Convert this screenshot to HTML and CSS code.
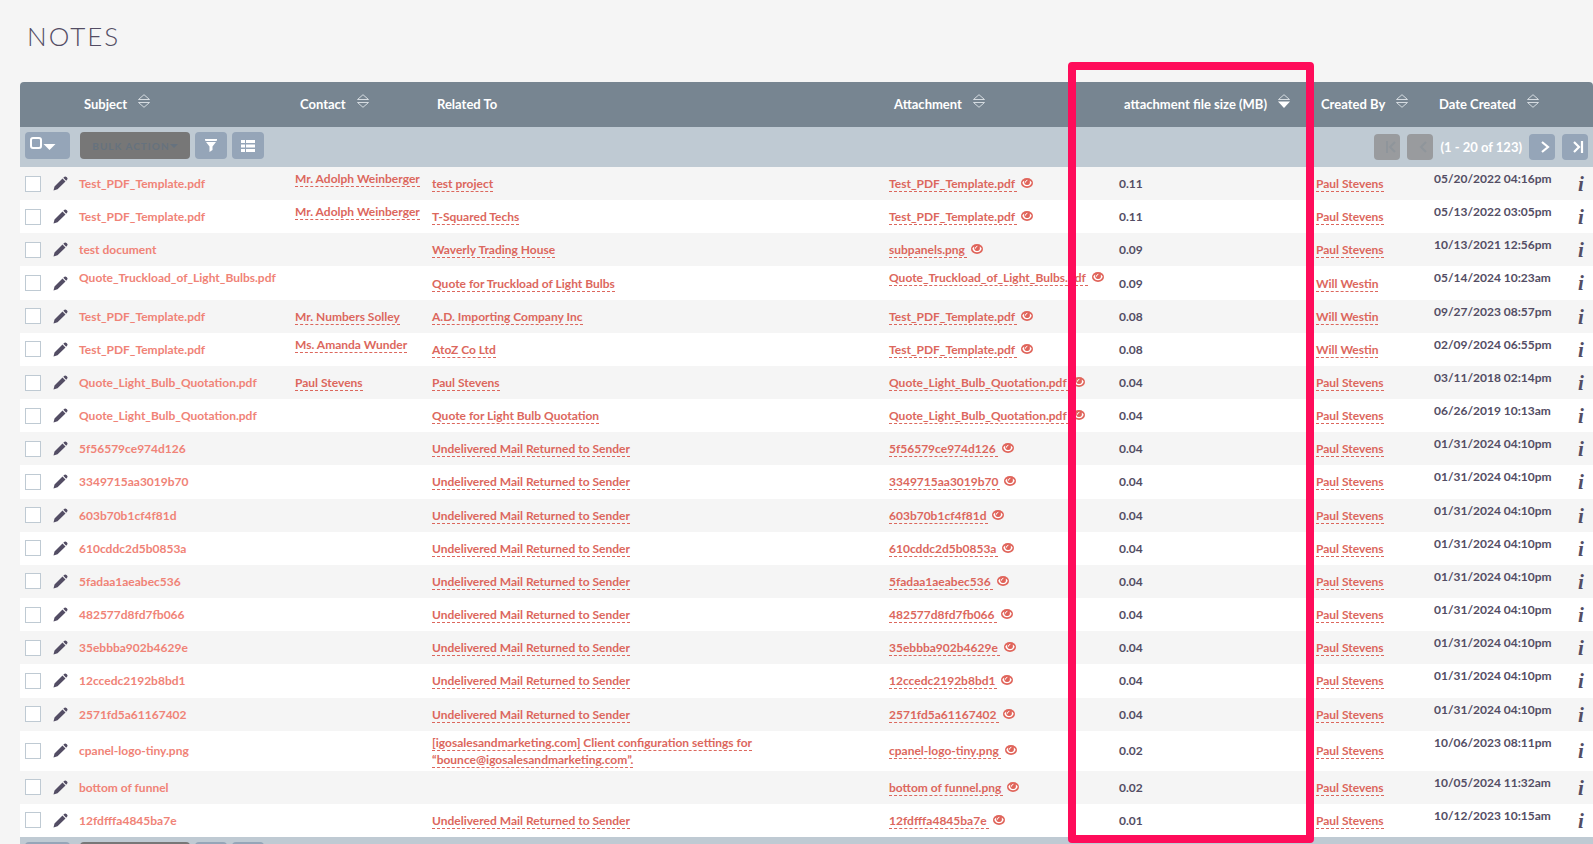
FILE: index.html
```
<!DOCTYPE html>
<html lang="en">
<head>
    <meta charset="UTF-8">
    <meta name="viewport" content="width=device-width, initial-scale=1.0">
    <title>Notes</title>
    <link rel="stylesheet" href="styles.css">
</head>
<body>
    <svg class="sprite" aria-hidden="true">
        <symbol id="sort" viewBox="0 0 14 14">
            <path d="M1.500 5.500 L7 0.700 L12.500 5.500 Z M1.500 8.500 L7 13.300 L12.500 8.500 Z" fill="none" stroke="#d5dbe0"/>
        </symbol>
        <symbol id="sort-desc" viewBox="0 0 14 14">
            <path d="M1.500 5.500 L7 0.700 L12.500 5.500 Z" fill="none" stroke="#d5dbe0"/>
            <path d="M1 7.500 H13 L7 14 Z" fill="#fff"/>
        </symbol>
        <symbol id="pencil" viewBox="0 0 15 15">
            <path d="M0.500 14.500 L1.500 10.500 L9.500 2.500 L12.500 5.500 L4.500 13.200 Z M10.300 1.800 L11.500 0.700 Q12.500 0 13.500 1 L14.200 1.700 Q15 2.600 14.200 3.500 L13.200 4.700 Z" fill="#534d64"/>
        </symbol>
        <symbol id="eye" viewBox="0 0 12 10">
            <ellipse cx="6" cy="5" rx="6" ry="5" fill="#e0645a"/>
            <path d="M1.300 4.800 Q2 3 3.200 2.400 Q2.600 6.800 6 7 T8.800 2.400 Q10 3 10.700 4.800 Q9.300 8.300 6 8.300 T1.300 4.800 Z" fill="#fff"/>
            <path d="M4.400 4.600 Q4.300 2.600 6.400 2.300" fill="none" stroke="#fff"/>
        </symbol>
        <symbol id="filter" viewBox="0 0 12 13">
            <path d="M0 0 H12 V1 L11.500 2 H0.500 L0 1 Z M1 3 H11 L7.500 7.500 V11 L4.500 13 V7.500 Z" fill="#fff"/>
        </symbol>
        <symbol id="list" viewBox="0 0 14 12">
            <path d="M0 0 H4 V3 H0 Z M5 0 H14 V3 H5 Z M0 4.500 H4 V7.500 H0 Z M5 4.500 H14 V7.500 H5 Z M0 9 H4 V12 H0 Z M5 9 H14 V12 H5 Z" fill="#fff"/>
        </symbol>
        <symbol id="caret" viewBox="0 0 12 6">
            <path d="M0 0 H12 L6 6 Z" fill="currentColor"/>
        </symbol>
        <symbol id="next" viewBox="0 0 12 12">
            <path d="M3 1 L9 6 L3 11" fill="none" stroke="currentColor" stroke-width="2.200"/>
        </symbol>
        <symbol id="last" viewBox="0 0 12 12">
            <path d="M2 1 L7 6 L2 11 M10 0 V12" fill="none" stroke="currentColor" stroke-width="2.200"/>
        </symbol>
        <symbol id="prev" viewBox="0 0 12 12">
            <path d="M9 1 L4 6 L9 11" fill="none" stroke="currentColor" stroke-width="2"/>
        </symbol>
        <symbol id="first" viewBox="0 0 12 12">
            <path d="M11 1 L6 6 L11 11 M3 0 V12" fill="none" stroke="currentColor" stroke-width="2"/>
        </symbol>
    </svg>

    <h1 class="module-title">NOTES</h1>

    <div class="list-view">
        <table class="list">
            <colgroup>
                <col class="col-check">
                <col class="col-edit">
                <col class="col-subject">
                <col class="col-contact">
                <col class="col-related">
                <col class="col-attachment">
                <col class="col-size">
                <col class="col-user">
                <col class="col-date">
                <col class="col-info">
            </colgroup>
            <thead>
                <tr>
                    <th></th>
                    <th></th>
                    <th><a href="#">Subject <svg class="sort"><use href="#sort"/></svg></a></th>
                    <th><a href="#">Contact <svg class="sort"><use href="#sort"/></svg></a></th>
                    <th>Related To</th>
                    <th><a href="#">Attachment <svg class="sort"><use href="#sort"/></svg></a></th>
                    <th><a href="#">attachment file size (MB) <svg class="sort"><use href="#sort-desc"/></svg></a></th>
                    <th><a href="#">Created By <svg class="sort"><use href="#sort"/></svg></a></th>
                    <th><a href="#">Date Created <svg class="sort"><use href="#sort"/></svg></a></th>
                    <th></th>
                </tr>
                <tr class="toolbar-row">
                    <td colspan="10">
                        <div class="toolbar">
                            <button class="btn btn-select" aria-label="Select"><span class="box"></span><svg class="caret"><use href="#caret"/></svg></button>
                            <button class="btn btn-bulk" disabled>BULK ACTION<svg class="caret-small"><use href="#caret"/></svg></button>
                            <button class="btn btn-icon" aria-label="Filter"><svg class="icon-filter"><use href="#filter"/></svg></button>
                            <button class="btn btn-icon" aria-label="Columns"><svg class="icon-list"><use href="#list"/></svg></button>
                            <div class="pagination">
                                <button class="btn btn-page" aria-label="Start" disabled><svg><use href="#first"/></svg></button>
                                <button class="btn btn-page" aria-label="Previous" disabled><svg><use href="#prev"/></svg></button>
                                <span class="page-numbers">(1 - 20 of 123)</span>
                                <button class="btn btn-page" aria-label="Next"><svg><use href="#next"/></svg></button>
                                <button class="btn btn-page" aria-label="End"><svg><use href="#last"/></svg></button>
                            </div>
                        </div>
                    </td>
                </tr>
            </thead>
            <tbody id="rows"></tbody>
            <tfoot id="footer"></tfoot>
        </table>
        <div class="highlight"></div>
    </div>

    <script>
        const mail = 'Undelivered Mail Returned to Sender';
        const paul = 'Paul Stevens';
        const will = 'Will Westin';

        // subject, contact, related to, attachment, size, created by, date, cells aligned to the top
        const notes = [
            ['Test_PDF_Template.pdf', 'Mr. Adolph Weinberger', 'test project', 'Test_PDF_Template.pdf', '0.11', paul, '05/20/2022 04:16pm', 'contact'],
            ['Test_PDF_Template.pdf', 'Mr. Adolph Weinberger', 'T-Squared Techs', 'Test_PDF_Template.pdf', '0.11', paul, '05/13/2022 03:05pm', 'contact'],
            ['test document', '', 'Waverly Trading House', 'subpanels.png', '0.09', paul, '10/13/2021 12:56pm', ''],
            ['Quote_Truckload_of_Light_Bulbs.pdf', '', 'Quote for Truckload of Light Bulbs', 'Quote_Truckload_of_Light_Bulbs.pdf', '0.09', will, '05/14/2024 10:23am', 'subject attachment'],
            ['Test_PDF_Template.pdf', 'Mr. Numbers Solley', 'A.D. Importing Company Inc', 'Test_PDF_Template.pdf', '0.08', will, '09/27/2023 08:57pm', ''],
            ['Test_PDF_Template.pdf', 'Ms. Amanda Wunder', 'AtoZ Co Ltd', 'Test_PDF_Template.pdf', '0.08', will, '02/09/2024 06:55pm', 'contact'],
            ['Quote_Light_Bulb_Quotation.pdf', 'Paul Stevens', 'Paul Stevens', 'Quote_Light_Bulb_Quotation.pdf', '0.04', paul, '03/11/2018 02:14pm', ''],
            ['Quote_Light_Bulb_Quotation.pdf', '', 'Quote for Light Bulb Quotation', 'Quote_Light_Bulb_Quotation.pdf', '0.04', paul, '06/26/2019 10:13am', ''],
            ['5f56579ce974d126', '', mail, '5f56579ce974d126', '0.04', paul, '01/31/2024 04:10pm', ''],
            ['3349715aa3019b70', '', mail, '3349715aa3019b70', '0.04', paul, '01/31/2024 04:10pm', ''],
            ['603b70b1cf4f81d', '', mail, '603b70b1cf4f81d', '0.04', paul, '01/31/2024 04:10pm', ''],
            ['610cddc2d5b0853a', '', mail, '610cddc2d5b0853a', '0.04', paul, '01/31/2024 04:10pm', ''],
            ['5fadaa1aeabec536', '', mail, '5fadaa1aeabec536', '0.04', paul, '01/31/2024 04:10pm', ''],
            ['482577d8fd7fb066', '', mail, '482577d8fd7fb066', '0.04', paul, '01/31/2024 04:10pm', ''],
            ['35ebbba902b4629e', '', mail, '35ebbba902b4629e', '0.04', paul, '01/31/2024 04:10pm', ''],
            ['12ccedc2192b8bd1', '', mail, '12ccedc2192b8bd1', '0.04', paul, '01/31/2024 04:10pm', ''],
            ['2571fd5a61167402', '', mail, '2571fd5a61167402', '0.04', paul, '01/31/2024 04:10pm', ''],
            ['cpanel-logo-tiny.png', '', '[igosalesandmarketing.com] Client configuration settings for “bounce@igosalesandmarketing.com”.', 'cpanel-logo-tiny.png', '0.02', paul, '10/06/2023 08:11pm', ''],
            ['bottom of funnel', '', '', 'bottom of funnel.png', '0.02', paul, '10/05/2024 11:32am', ''],
            ['12fdfffa4845ba7e', '', mail, '12fdfffa4845ba7e', '0.01', paul, '10/12/2023 10:15am', '']
        ];

        const link = (text) => text ? `<a href="#" class="link">${text}</a>` : '';

        document.getElementById('rows').innerHTML = notes.map((n, i) => {
            const [subject, contact, related, file, size, user, date, top] = n;
            const align = (name) => top.includes(name) ? ' class="top"' : '';
            return `<tr>
                <td><input type="checkbox" class="check" id="note${i}" aria-label="Select ${subject}"></td>
                <td><a href="#" class="edit" aria-label="Edit"><svg><use href="#pencil"/></svg></a></td>
                <td${align('subject')}><a href="#" class="subject">${subject}</a></td>
                <td${align('contact')}>${link(contact)}</td>
                <td class="related">${link(related)}</td>
                <td${align('attachment')}><a href="#" class="link file">${file}</a><a href="#" aria-label="Preview"><svg class="eye"><use href="#eye"/></svg></a></td>
                <td>${size}</td>
                <td>${link(user)}</td>
                <td class="top">${date}</td>
                <td><button class="info">i</button></td>
            </tr>`;
        }).join('');

        // same toolbar below the list
        document.getElementById('footer').append(document.querySelector('.toolbar-row').cloneNode(true));
    </script>
</body>
</html>
```
FILE: styles.css
```
* {
    box-sizing: border-box;
}
html {
    scrollbar-width: none;
}
body {
    margin: 0;
    padding: 19px 0 0 20px;
    background-color: #f5f5f5;
    color: #534d64;
    font-family: Lato, "Liberation Sans", sans-serif;
    font-size: 12px;
    line-height: 17px;
}
a {
    text-decoration: none;
}
button {
    font-family: inherit;
    cursor: pointer;
}
.sprite {
    display: none;
}
.module-title {
    margin: 0;
    padding: 0 7px 29px;
    font-size: 26px;
    font-weight: 300;
    letter-spacing: 2px;
    line-height: 34px;
}
.list-view {
    position: relative;
}
.list {
    width: 100%;
    table-layout: fixed;
    border-collapse: separate;
    border-spacing: 0;
}
.col-check { width: 28px; }
.col-edit { width: 26px; }
.col-subject { width: 216px; }
.col-contact { width: 137px; }
.col-attachment { width: 230px; }
.col-size { width: 197px; }
.col-user { width: 118px; }
.col-date { width: 135px; }
.col-info { width: 29px; }

th {
    height: 45px;
    padding: 0 0 0 10px;
    background-color: #778591;
    color: #fff;
    font-size: 13px;
    font-weight: bold;
    text-align: left;
    white-space: nowrap;
}
th:first-child {
    border-top-left-radius: 4px;
}
th:last-child {
    border-top-right-radius: 4px;
}
th a {
    display: inline-flex;
    align-items: center;
    gap: 10px;
    color: #fff;
}
.sort {
    width: 14px;
    height: 14px;
    margin-bottom: 8px;
}

/* toolbar */
.toolbar-row td {
    padding: 0;
    background-color: #bfcad3;
}
.toolbar {
    display: flex;
    align-items: center;
    gap: 5px;
    height: 40px;
    padding: 0 5px 3px;
}
.btn {
    display: flex;
    align-items: center;
    justify-content: center;
    height: 27px;
    padding: 0;
    border: none;
    border-radius: 4px;
    background-color: #95a5b8;
    color: #fff;
}
.btn-select {
    justify-content: flex-start;
    width: 45px;
    margin-right: 5px;
    padding: 0 0 6px 5px;
}
.box {
    width: 12px;
    height: 12px;
    border: 2px solid #fff;
    border-radius: 3px;
}
.caret {
    width: 13px;
    height: 6px;
    margin: 8px 0 0 1px;
}
.btn-bulk {
    width: 110px;
    background-color: #777;
    color: #66727e;
    font-size: 10px;
    font-weight: bold;
    letter-spacing: 1px;
}
.caret-small {
    width: 8px;
    height: 4px;
}
.btn-icon {
    width: 32px;
}
.icon-filter {
    width: 12px;
    height: 13px;
}
.icon-list {
    width: 14px;
    height: 12px;
}
.pagination {
    display: flex;
    align-items: center;
    gap: 7px;
    margin-left: auto;
    padding-top: 3px;
}
.btn-page {
    width: 26px;
    height: 26px;
    padding-left: 5px;
}
.btn-page svg {
    width: 12px;
    height: 12px;
}
.btn-page:disabled {
    background-color: #999b9e;
    color: #8f959b;
}
.page-numbers {
    color: #fff;
    font-size: 13px;
    font-weight: bold;
}

/* rows */
tbody tr:nth-child(even) {
    background-color: #fff;
}
tbody td {
    padding: 3px 0 3px 5px;
    font-weight: bold;
    vertical-align: middle;
    white-space: nowrap;
}
tbody .top {
    vertical-align: top;
}
tbody .related {
    white-space: normal;
}
.check {
    appearance: none;
    display: block;
    width: 16px;
    height: 16px;
    margin: 0;
    border: 1px solid #bfcad3;
    background-color: #fff;
}
.edit svg {
    display: block;
    width: 15px;
    height: 15px;
}
.subject {
    color: #f08377;
}
.link {
    border-bottom: 1px dashed #dc675d;
    color: #dc675d;
}
.file {
    margin-right: 4px;
    padding-right: 2px;
}
.eye {
    width: 12px;
    height: 10px;
}
.info {
    display: block;
    width: 24px;
    padding: 2px 0 0;
    border: none;
    background: none;
    color: #534d64;
    font: italic bold 21px/1.198 "Liberation Serif", serif;
}

/* marks the file size column */
.highlight {
    position: absolute;
    top: -20px;
    right: 279px;
    bottom: 34px;
    width: 246px;
    border: 8px solid #ff0c5a;
    border-radius: 4px;
    pointer-events: none;
}
```
